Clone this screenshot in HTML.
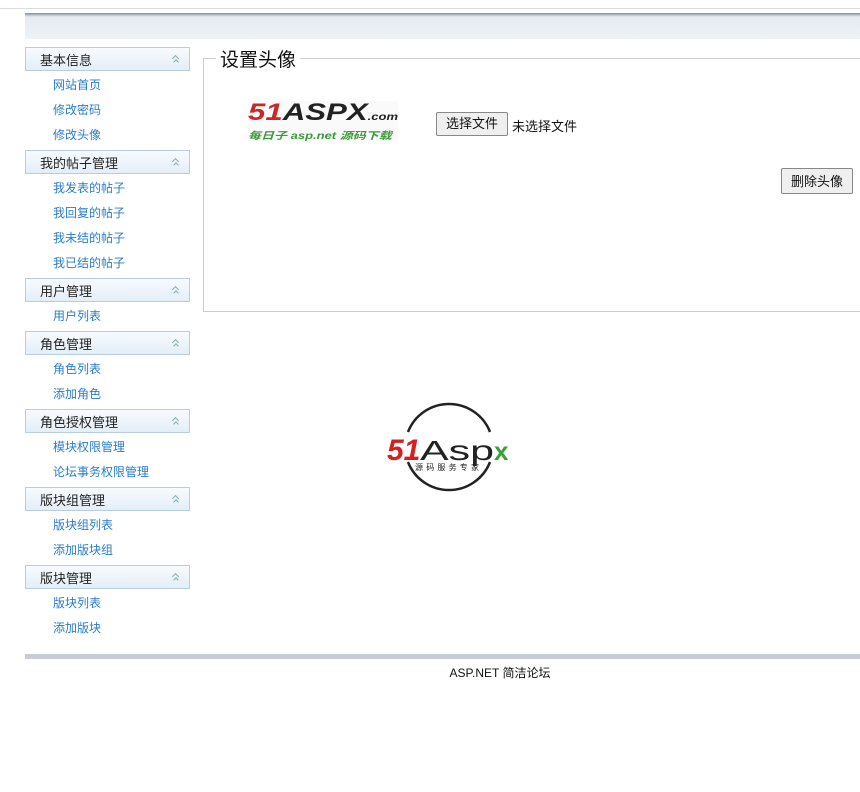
<!DOCTYPE html>
<html><head><meta charset="utf-8"><style>
*{margin:0;padding:0;box-sizing:border-box}
body{width:860px;height:792px;background:#fff;position:relative;overflow:hidden;font-family:"Liberation Sans","Noto Sans CJK SC",sans-serif;font-size:13px;color:#222}
.topline{position:absolute;left:0;top:8px;width:860px;height:1px;background:#d8dbe0}
.hdr{position:absolute;left:25px;top:13px;width:835px;height:26px;background:linear-gradient(#7d8a99 0,#b7c1cc 2px,#e6ebf0 4px,#eef2f6 100%)}
.side{position:absolute;left:25px;top:47px;width:165px}
.g{height:24px;border:1px solid #b8cde0;background:linear-gradient(#f8fbfe,#e3eef8);position:relative;padding-left:14px;line-height:25px;font-size:13px;color:#222}
.g:after{content:"";position:absolute;right:11px;top:8px;width:4px;height:4px;border-left:1px solid #8aa;border-top:1px solid #8aa;transform:rotate(45deg)}
.g i{position:absolute;right:11px;top:12px;width:4px;height:4px;border-left:1px solid #8aa;border-top:1px solid #8aa;transform:rotate(45deg)}
.l{height:25px;line-height:29px;padding-left:28px;color:#2a7dc8;font-size:12px}
.gap{height:4px}
fieldset{position:absolute;left:203px;top:45px;width:680px;height:267px;border:1px solid #ccc;border-right:none}
legend{margin-left:12px;padding:0 4px;font-size:19px;color:#111}
.btn{position:absolute;border:1px solid #888;border-radius:2px;background:#efefef;font-size:13px;line-height:22px;padding:0 9px;color:#111}
.foot{position:absolute;left:25px;top:654px;width:835px;height:5px;background:#c8ccd4}
.ft{position:absolute;left:0;width:1000px;top:664px;text-align:center;font-size:12px;color:#111}
</style></head><body>
<div class="topline"></div>
<div class="hdr"></div>
<div class="side">
<div class="g">基本信息<i></i></div><div class="l">网站首页</div><div class="l">修改密码</div><div class="l">修改头像</div><div class="gap"></div>
<div class="g">我的帖子管理<i></i></div><div class="l">我发表的帖子</div><div class="l">我回复的帖子</div><div class="l">我未结的帖子</div><div class="l">我已结的帖子</div><div class="gap"></div>
<div class="g">用户管理<i></i></div><div class="l">用户列表</div><div class="gap"></div>
<div class="g">角色管理<i></i></div><div class="l">角色列表</div><div class="l">添加角色</div><div class="gap"></div>
<div class="g">角色授权管理<i></i></div><div class="l">模块权限管理</div><div class="l">论坛事务权限管理</div><div class="gap"></div>
<div class="g">版块组管理<i></i></div><div class="l">版块组列表</div><div class="l">添加版块组</div><div class="gap"></div>
<div class="g">版块管理<i></i></div><div class="l">版块列表</div><div class="l">添加版块</div>
</div>
<fieldset><legend>设置头像</legend></fieldset>
<div style="position:absolute;left:248px;top:101px;width:150px;height:40px;background:#fafafa">
<div style="font:italic 900 24px 'Liberation Sans',sans-serif;line-height:24px;transform:scaleX(1.3);transform-origin:left"><span style="color:#c8282a">51</span><span style="color:#222">ASPX</span><span style="font-size:10px;color:#222">.com</span></div>
<div style="font:italic bold 10px 'Liberation Sans','Noto Sans CJK SC',sans-serif;color:#3a9a3a;line-height:14px;transform:scaleX(1.3);transform-origin:left">每日子 asp.net 源码下载</div>
</div>
<div class="btn" style="left:436px;top:112px;height:24px">选择文件</div>
<div style="position:absolute;left:512px;top:116px;font-size:13px;color:#111">未选择文件</div>
<div class="btn" style="left:781px;top:168px;height:26px;line-height:26px">删除头像</div>
<svg style="position:absolute;left:380px;top:400px" width="140" height="96" viewBox="0 0 140 96">
<path d="M28 32 A44 44 0 0 1 110 32" fill="none" stroke="#222" stroke-width="2.5"/>
<path d="M110 62 A44 44 0 0 1 28 62" fill="none" stroke="#222" stroke-width="2.5"/>
<text x="7" y="60" font-family="Liberation Sans" font-weight="900" font-style="italic" font-size="30" fill="#d42020">51</text>
<text x="40" y="60" font-family="Liberation Sans" font-size="28" fill="#222" textLength="74" lengthAdjust="spacingAndGlyphs">Asp</text>
<text x="114" y="60" font-family="Liberation Sans" font-weight="bold" font-size="26" fill="#3aa13a">x</text>
<text x="35" y="70" font-family="Noto Sans CJK SC" font-size="8" fill="#222" textLength="64">源码服务专家</text>
</svg>
<div class="foot"></div>
<div class="ft">ASP.NET 简洁论坛</div>
</body></html>
